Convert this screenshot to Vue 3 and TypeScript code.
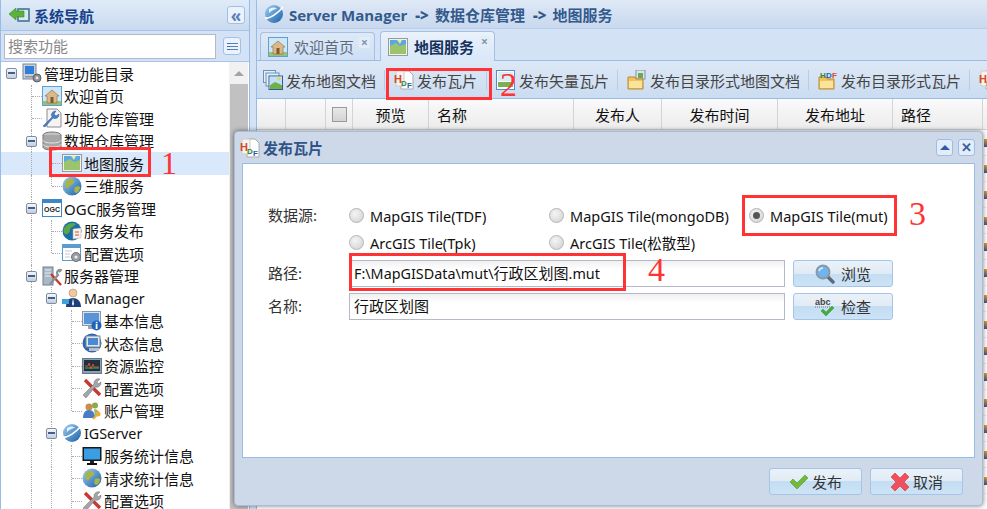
<script setup lang="ts">
interface TreeRow {
  label: string;
  icon: string;
  guides: string; // one char per level: | line, T tee, L last, E expander
  selected?: boolean;
}

const rows: TreeRow[] = [
  { label: '管理功能目录', icon: 'server', guides: 'R' },
  { label: '欢迎首页', icon: 'house', guides: 'T' },
  { label: '功能仓库管理', icon: 'wrenchdoc', guides: 'T' },
  { label: '数据仓库管理', icon: 'db', guides: 'E' },
  { label: '地图服务', icon: 'map', guides: '|T', selected: true },
  { label: '三维服务', icon: 'globe', guides: '|L' },
  { label: 'OGC服务管理', icon: 'ogc', guides: 'E' },
  { label: '服务发布', icon: 'globedoc', guides: '|T' },
  { label: '配置选项', icon: 'calgear', guides: '|L' },
  { label: '服务器管理', icon: 'srvtools', guides: 'E' },
  { label: 'Manager', icon: 'person', guides: '|E' },
  { label: '基本信息', icon: 'moninfo', guides: '||T' },
  { label: '状态信息', icon: 'status', guides: '||T' },
  { label: '资源监控', icon: 'chart', guides: '||T' },
  { label: '配置选项', icon: 'tools', guides: '||T' },
  { label: '账户管理', icon: 'users', guides: '||L' },
  { label: 'IGServer', icon: 'ie', guides: '|E' },
  { label: '服务统计信息', icon: 'monitor', guides: '||T' },
  { label: '请求统计信息', icon: 'globe', guides: '||T' },
  { label: '配置选项', icon: 'tools', guides: '||T' },
];

const isLatin = (s: string) => /^[A-Za-z]+$/.test(s);

const toolbar = [
  { label: '发布地图文档', icon: 'stack', width: 123 },
  { label: '发布瓦片', icon: 'hdf', width: 102 },
  { label: '发布矢量瓦片', icon: 'mapdoc', width: 131 },
  { label: '发布目录形式地图文档', icon: 'foldermap', width: 191 },
  { label: '发布目录形式瓦片', icon: 'folderhdf', width: 161 },
  { label: '', icon: 'hdf', width: 20 },
];

const columns = [
  { label: '', width: 29 },
  { label: '', width: 40 },
  { label: '', width: 27, check: true },
  { label: '预览', width: 76 },
  { label: '名称', width: 145, left: true },
  { label: '发布人', width: 88 },
  { label: '发布时间', width: 116 },
  { label: '发布地址', width: 115 },
  { label: '路径', width: 90, left: true },
];

const sources = [
  { label: 'MapGIS Tile(TDF)', checked: false },
  { label: 'MapGIS Tile(mongoDB)', checked: false },
  { label: 'MapGIS Tile(mut)', checked: true },
  { label: 'ArcGIS Tile(Tpk)', checked: false },
  { label: 'ArcGIS Tile(松散型)', checked: false },
];
</script>

<template>
  <svg class="defs" width="0" height="0">
    <defs>
      <linearGradient id="gGlobe" x1="0" y1="0" x2="1" y2="1">
        <stop offset="0" stop-color="#9fd0f0" />
        <stop offset="1" stop-color="#1a5fa8" />
      </linearGradient>
      <symbol id="i-back" viewBox="0 0 24 20">
        <rect x="9" y="3" width="13" height="14" rx="1" fill="#5d8aa6" />
        <rect x="11" y="5" width="9" height="10" fill="#dbe8f0" />
        <path d="M1 9l7-6v3h8v6H8v3z" fill="#5cb13c" stroke="#3b8a26" stroke-width=".6" />
      </symbol>
      <symbol id="i-server" viewBox="0 0 20 20">
        <rect x="1" y="1" width="13" height="15" fill="#c9ced6" stroke="#7b8594" />
        <rect x="3" y="3" width="9" height="8" fill="#2f7fd8" />
        <rect x="3" y="13" width="9" height="1.5" fill="#8b95a3" />
        <circle cx="15" cy="15" r="4" fill="#8e9297" stroke="#5c6066" />
        <circle cx="15" cy="15" r="1.4" fill="#e6e6e6" />
      </symbol>
      <symbol id="i-house" viewBox="0 0 20 20">
        <rect x=".5" y=".5" width="19" height="19" fill="#cfe6f7" stroke="#5aa2d6" />
        <rect x="1" y="15" width="18" height="4" fill="#9cc070" />
        <path d="M3 10l7-6 7 6h-2v7H5v-7z" fill="#d9b98a" stroke="#8a6a3c" stroke-width=".6" />
        <rect x="8.500" y="11" width="3" height="6" fill="#7c5a30" />
      </symbol>
      <symbol id="i-wrenchdoc" viewBox="0 0 20 20">
        <path d="M5 1h10l4 4v14H5z" fill="#f4f4f4" stroke="#8c8c8c" />
        <path d="M1 18l9-9a4 4 0 0 1 4-6l-2 3 2 2 3-2a4 4 0 0 1-6 4l-8 9z" fill="#4a7fc4" stroke="#2a5a9c" stroke-width=".5" />
      </symbol>
      <symbol id="i-db" viewBox="0 0 20 20">
        <ellipse cx="10" cy="4" rx="9" ry="3" fill="#c2c2c2" stroke="#777" />
        <path d="M1 4v12c0 2 4 3 9 3s9-1 9-3V4" fill="#a7a7a7" stroke="#777" />
        <path d="M1 9c0 2 4 3 9 3s9-1 9-3M1 13c0 2 4 3 9 3s9-1 9-3" fill="none" stroke="#e6e6e6" />
      </symbol>
      <symbol id="i-map" viewBox="0 0 20 20">
        <rect x=".5" y="1.500" width="19" height="17" fill="#f0f0f0" stroke="#9a9a9a" />
        <rect x="2" y="3" width="16" height="8" fill="#58a8e4" />
        <path d="M2 9l6-3 4 3 6-2v10H2z" fill="#9cc46c" />
        <path d="M9 3h5l-2 4z" fill="#e8e6a0" />
      </symbol>
      <symbol id="i-mapdoc" viewBox="0 0 20 20">
        <rect x=".5" y=".5" width="18" height="19" fill="#fff" stroke="#5b8cc0" />
        <rect x="2" y="2" width="15" height="9" fill="#d8ecfa" />
        <rect x="2" y="12" width="15" height="5" fill="#7fb050" />
      </symbol>
      <symbol id="i-globe" viewBox="0 0 20 20">
        <circle cx="10" cy="10" r="9.500" fill="url(#gGlobe)" />
        <path d="M5 4c3-2 6-1 7 1s-1 3-3 4-2 4-4 3-3-6 0-8zM13 11c2-1 4-1 5 0 0 3-2 6-4 6s-2-4-1-6z" fill="#a8b448" />
      </symbol>
      <symbol id="i-ie" viewBox="0 0 20 20">
        <circle cx="10" cy="10" r="9" fill="url(#gGlobe)" />
        <path d="M1 14C6 15 14 9 19 3" fill="none" stroke="#fff" stroke-width="1.600" />
        <path d="M5 5c3-2 6-2 8 0-3 0-6 2-8 4z" fill="#e8f2fb" />
      </symbol>
      <symbol id="i-ogc" viewBox="0 0 20 20">
        <rect x=".5" y="1.500" width="19" height="17" fill="#fff" stroke="#3f86c6" />
        <rect x="1" y="2" width="18" height="3" fill="#3f86c6" />
        <text x="10" y="14" font-size="7" font-family="'Liberation Sans', sans-serif" font-weight="700" text-anchor="middle" fill="#222">OGC</text>
      </symbol>
      <symbol id="i-globedoc" viewBox="0 0 20 20">
        <circle cx="10" cy="10" r="9.500" fill="#1b6ea8" />
        <path d="M3 6c3-4 8-5 11-3-2 3-6 3-6 6s-3 5-5 4-2-5 0-7z" fill="#59a548" />
        <path d="M11 8l8-1v10l-8 1z" fill="#f5f1ea" stroke="#b9b2a6" stroke-width=".5" />
        <path d="M13 11h4M13 14h4" stroke="#d0503c" />
      </symbol>
      <symbol id="i-calgear" viewBox="0 0 20 20">
        <rect x=".5" y="1.500" width="18" height="16" fill="#fff" stroke="#5a9ccf" />
        <rect x="1" y="2" width="17" height="3" fill="#5a9ccf" />
        <path d="M3 8h7M3 11h5M3 14h5" stroke="#c2cbd4" />
        <circle cx="14" cy="14" r="4.500" fill="#9a9ea3" stroke="#6e7277" />
        <circle cx="14" cy="14" r="1.600" fill="#eee" />
      </symbol>
      <symbol id="i-srvtools" viewBox="0 0 20 20">
        <rect x="1" y="1" width="10" height="18" fill="#a9b8c6" stroke="#6f7f8e" />
        <path d="M3 4h6M3 7h6M3 10h6" stroke="#e5ebf0" />
        <path d="M9 8l10 11" stroke="#c53a2e" stroke-width="2.400" />
        <path d="M8 18l8-9a3 3 0 0 1 3-5l-2 2" fill="none" stroke="#8c8f93" stroke-width="2.200" />
      </symbol>
      <symbol id="i-tools" viewBox="0 0 20 20">
        <path d="M3 2l15 15" stroke="#c93a2e" stroke-width="3.400" />
        <path d="M1 17L12 6a4.500 4.500 0 0 1 6-5l-3 3 1 2 3-2a4.500 4.500 0 0 1-6 5L4 20z" fill="#a2a5a9" stroke="#6e7175" stroke-width=".5" />
      </symbol>
      <symbol id="i-person" viewBox="0 0 20 20">
        <circle cx="11" cy="5" r="4" fill="#f0c9a0" stroke="#a57c50" stroke-width=".5" />
        <path d="M4 19c0-6 3-9 7-9s8 3 8 9z" fill="#1f3f7c" />
        <path d="M11 10l-1 6 1 2 1-2z" fill="#fff" />
        <rect x="0" y="11" width="7" height="5" fill="#3fa2d8" />
      </symbol>
      <symbol id="i-moninfo" viewBox="0 0 20 20">
        <rect x=".5" y=".5" width="18" height="14" fill="#dce3ec" stroke="#8b97a6" />
        <rect x="2" y="2" width="15" height="11" fill="#5a94d8" />
        <rect x="6" y="15" width="7" height="3" fill="#9aa5b2" />
        <circle cx="14.500" cy="14.500" r="5" fill="#1c62b8" />
        <rect x="13.700" y="13" width="1.800" height="5" fill="#fff" />
        <rect x="13.700" y="10.800" width="1.800" height="1.500" fill="#fff" />
      </symbol>
      <symbol id="i-status" viewBox="0 0 20 20">
        <circle cx="10" cy="10" r="9.500" fill="#2d68ae" />
        <rect x="4" y="3" width="14" height="11" fill="#dfe6ee" stroke="#7a8696" />
        <rect x="6" y="5" width="10" height="7" fill="#4a8ad2" />
        <rect x="7" y="15" width="10" height="3" fill="#b8bfc8" />
      </symbol>
      <symbol id="i-chart" viewBox="0 0 20 20">
        <rect x=".5" y="2.500" width="19" height="15" fill="#8ba0b4" stroke="#66788a" />
        <rect x="2" y="4" width="16" height="11" fill="#20303c" />
        <path d="M3 10h3l1-3 2 6 2-5 1 3h5" fill="none" stroke="#d84a3a" />
        <path d="M3 12h14" stroke="#4caf50" />
      </symbol>
      <symbol id="i-users" viewBox="0 0 20 20">
        <circle cx="7" cy="6" r="3.500" fill="#c98d4c" />
        <circle cx="13" cy="4.500" r="3" fill="#8aa84c" />
        <path d="M1 17c0-5 2-8 6-8s6 3 6 8z" fill="#4a7cc4" />
        <path d="M12 8c3 0 5 2 6 6l-5 1z" fill="#9ab85c" />
        <path d="M11 18l4-4" stroke="#e8b030" stroke-width="2" />
        <circle cx="16" cy="13" r="2.500" fill="#e8b030" />
      </symbol>
      <symbol id="i-monitor" viewBox="0 0 20 20">
        <rect x=".5" y="1" width="19" height="14" fill="#1a1a1a" />
        <rect x="2" y="2.500" width="16" height="11" fill="#3a9ee4" />
        <rect x="8" y="15" width="4" height="2" fill="#222" />
        <rect x="5" y="17" width="10" height="2" fill="#111" />
      </symbol>
      <symbol id="i-stack" viewBox="0 0 20 20">
        <rect x=".5" y=".5" width="12" height="12" fill="#e2eef8" stroke="#6a93b8" />
        <rect x="3" y="3" width="13" height="13" fill="#e2eef8" stroke="#6a93b8" />
        <rect x="6" y="6" width="13.500" height="13.500" fill="#fff" stroke="#2d5e94" />
        <rect x="7" y="7" width="12" height="7" fill="#bfe0f7" />
        <path d="M7 19v-4l5-3 7 3v4z" fill="#6fb04a" />
        <circle cx="16" cy="9" r="1.500" fill="#f2d040" />
      </symbol>
      <symbol id="i-hdf" viewBox="0 0 20 20">
        <path d="M7 1h8l4 4v14H7z" fill="#fff" stroke="#aaa" />
        <path d="M2 1h8v15H2z" fill="#f6f2ee" stroke="#ccc" />
        <text x="0" y="13" font-size="11" font-family="'Liberation Sans', sans-serif" font-weight="700" fill="#d8492c">H</text>
        <text x="7" y="16" font-size="8" font-family="'Liberation Sans', sans-serif" font-weight="700" fill="#2f8a3a">D</text>
        <text x="13" y="18" font-size="8" font-family="'Liberation Sans', sans-serif" font-weight="700" fill="#2a5ea8">F</text>
      </symbol>
      <symbol id="i-foldermap" viewBox="0 0 20 20">
        <rect x="9" y="0" width="9" height="9" fill="#d8e4ee" stroke="#7a94a8" />
        <rect x="11" y="3" width="5" height="5" fill="#6fa850" />
        <path d="M1 7h7l1 2h7v10H1z" fill="#f2c35c" stroke="#b98a2c" />
        <path d="M2 11h13v7H2z" fill="#fbe39c" />
      </symbol>
      <symbol id="i-folderhdf" viewBox="0 0 20 20">
        <path d="M1 7h7l1 2h7v10H1z" fill="#f2c35c" stroke="#b98a2c" />
        <path d="M2 11h13v7H2z" fill="#fbe39c" />
        <text x="2" y="8" font-size="8" font-family="'Liberation Sans', sans-serif" font-weight="700" fill="#2f8a3a">H</text>
        <text x="8" y="8" font-size="8" font-family="'Liberation Sans', sans-serif" font-weight="700" fill="#2a5ea8">D</text>
        <text x="14" y="8" font-size="8" font-family="'Liberation Sans', sans-serif" font-weight="700" fill="#d8492c">F</text>
      </symbol>
      <symbol id="i-lens" viewBox="0 0 20 20">
        <path d="M12 12l6 6" stroke="#5c6b7c" stroke-width="3.400" stroke-linecap="round" />
        <circle cx="8" cy="8" r="6.500" fill="#6fb4ec" stroke="#8b98a6" stroke-width="2" />
        <path d="M4 7a4 4 0 0 1 4-3" fill="none" stroke="#e4f2fc" stroke-width="1.500" />
      </symbol>
      <symbol id="i-abc" viewBox="0 0 20 20">
        <text x="0" y="8" font-size="9" font-family="'Liberation Sans', sans-serif" font-weight="700" fill="#444">abc</text>
        <path d="M0 10h15" stroke="#777" stroke-dasharray="1 1" />
        <path d="M6 14l2-2 3 3 6-6 2 2-8 8z" fill="#3fae3a" stroke="#2a8a28" stroke-width=".4" />
      </symbol>
      <symbol id="i-check" viewBox="0 0 20 20">
        <path d="M1 10l3-3 4 4 8-8 3 3-11 11z" fill="#75b83e" stroke="#4f9a28" stroke-width=".6" />
      </symbol>
      <symbol id="i-cross" viewBox="0 0 20 20">
        <path d="M5 1l5 5 5-5 4 4-5 5 5 5-4 4-5-5-5 5-4-4 5-5-5-5z" fill="#f0505a" stroke="#d0353f" stroke-width=".6" />
      </symbol>
    </defs>
  </svg>

  <div class="page">
    <aside class="side">
      <div class="side-head">
        <svg class="back"><use href="#i-back" /></svg>
        <span class="side-title">系统导航</span>
        <button class="mini">«</button>
      </div>
      <div class="side-search">
        <div class="search-box">搜索功能</div>
        <button class="mini list-btn">
          <span></span><span></span><span></span>
        </button>
      </div>
      <div class="side-body">
        <ul class="tree">
          <li
            v-for="(row, i) in rows"
            :key="i"
            class="tree-row"
            :class="{ selected: row.selected }"
          >
            <span v-if="row.guides !== 'R'" class="lead"></span>
            <span
              v-for="(g, j) in row.guides"
              :key="j"
              class="guide"
              :class="'g-' + (g === '|' ? 'line' : g)"
            >
              <i v-if="g === 'E' || g === 'R'" class="exp"></i>
            </span>
            <svg class="ic"><use :href="'#i-' + row.icon" /></svg>
            <span class="tree-label" :class="{ latin: isLatin(row.label) }">{{ row.label }}</span>
          </li>
        </ul>
        <div class="scroll">
          <i class="scroll-up"></i>
          <div class="scroll-thumb"></div>
        </div>
      </div>
    </aside>

    <main class="content">
      <div class="crumb">
        <svg class="crumb-ic"><use href="#i-ie" /></svg>
        <span>Server Manager<b class="arrow">-&gt;</b>数据仓库管理<b class="arrow">-&gt;</b>地图服务</span>
      </div>
      <div class="tabs">
        <div class="tab">
          <svg class="ic"><use href="#i-house" /></svg>
          <span>欢迎首页</span>
          <i class="tab-x">×</i>
        </div>
        <div class="tab active">
          <svg class="ic"><use href="#i-map" /></svg>
          <span>地图服务</span>
          <i class="tab-x">×</i>
        </div>
      </div>
      <div class="toolbar">
        <div
          v-for="(t, i) in toolbar"
          :key="i"
          class="tool"
          :style="{ width: t.width + 'px' }"
        >
          <svg class="ic"><use :href="'#i-' + t.icon" /></svg>
          <span v-if="t.label">{{ t.label }}</span>
        </div>
      </div>
      <div class="grid-head">
        <div
          v-for="(c, i) in columns"
          :key="i"
          class="cell"
          :class="{ left: c.left }"
          :style="{ width: c.width + 'px' }"
        >
          <i v-if="c.check" class="check"></i>
          {{ c.label }}
        </div>
      </div>
      <div class="grid-body">
        <div v-for="n in 14" :key="n" class="grid-row"><i></i></div>
      </div>
    </main>

    <section class="dialog">
      <header class="dlg-head">
        <svg class="ic"><use href="#i-hdf" /></svg>
        <span class="dlg-title">发布瓦片</span>
        <button class="dlg-btn"><i class="tri"></i></button>
        <button class="dlg-btn x">✕</button>
      </header>
      <div class="dlg-body">
        <div class="form-row radios-row">
          <label class="form-label">数据源:</label>
          <div class="radios">
            <div v-for="s in sources" :key="s.label" class="radio">
              <i class="dot" :class="{ on: s.checked }"></i>
              <span>{{ s.label }}</span>
            </div>
          </div>
        </div>
        <div class="form-row">
          <label class="form-label">路径:</label>
          <div class="input"><span class="latin">F:\MapGISData\mut\</span>行政区划图<span class="latin">.mut</span></div>
          <button class="btn side-btn">
            <svg class="ic"><use href="#i-lens" /></svg>浏览
          </button>
        </div>
        <div class="form-row">
          <label class="form-label">名称:</label>
          <div class="input">行政区划图</div>
          <button class="btn side-btn">
            <svg class="ic"><use href="#i-abc" /></svg>检查
          </button>
        </div>
      </div>
      <footer class="dlg-foot">
        <button class="btn foot-btn">
          <svg class="ic"><use href="#i-check" /></svg>发布
        </button>
        <button class="btn foot-btn">
          <svg class="ic"><use href="#i-cross" /></svg>取消
        </button>
      </footer>
    </section>

    <!-- red marks drawn on top of the screenshot -->
    <div class="mark m1"></div>
    <div class="mark m2"></div>
    <div class="mark m3"></div>
    <div class="mark m4"></div>
    <span class="num n1">1</span>
    <span class="num n2">2</span>
    <span class="num n3">3</span>
    <span class="num n4">4</span>
  </div>
</template>

<style>
html,
body {
  margin: 0;
  background: #fff;
}
</style>

<style scoped>
.defs {
  position: absolute;
}

.page {
  position: relative;
  display: flex;
  gap: 6px;
  width: 987px;
  height: 509px;
  overflow: hidden;
  background: #d3e2f4;
  font-family: "Noto Sans", "Noto Sans CJK SC", sans-serif;
  font-size: 15px;
  color: #111;
}

.ic {
  flex: none;
  width: 20px;
  height: 20px;
}

button {
  font-family: inherit;
  font-size: 15px;
  padding: 0;
  cursor: pointer;
}

/* left panel */
.side {
  flex: none;
  display: flex;
  flex-direction: column;
  width: 250px;
  box-sizing: border-box;
  border-left: 1px solid #99bbe8;
  border-right: 1px solid #99bbe8;
  background: #d3e2f4;
}

.side-head {
  display: flex;
  align-items: center;
  height: 30px;
  padding-left: 7px;
  background: linear-gradient(#e0ebf8, #c9daef);
  border-bottom: 1px solid #a9c4e8;
}

.back {
  width: 24px;
  height: 20px;
}

.side-title {
  margin-left: 2px;
  font-weight: 700;
  color: #15428b;
}

.mini {
  display: flex;
  align-items: center;
  justify-content: center;
  width: 18px;
  height: 18px;
  margin-left: auto;
  margin-right: 4px;
  box-sizing: border-box;
  background: #eaf2fb;
  border: 1px solid #a3bfe4;
  border-radius: 3px;
  color: #5a7fb8;
  font-size: 17px;
  font-weight: 700;
  line-height: 1;
}

.side-search {
  display: flex;
  align-items: center;
  justify-content: space-between;
  height: 31px;
  border-bottom: 1px solid #a9c4e8;
  box-sizing: border-box;
  padding-left: 3px;
}

.search-box {
  width: 212px;
  height: 25px;
  line-height: 23px;
  box-sizing: border-box;
  padding-left: 3px;
  background: #fff;
  border: 1px solid #b5b8c8;
  color: #888;
}

.list-btn {
  flex-direction: column;
  gap: 2px;
  margin-right: 8px;
}

.list-btn span {
  display: block;
  width: 8px;
  height: 1px;
  background: #5a7fb0;
  border-left: 3px solid #2a72d8;
}

.side-body {
  position: relative;
  display: flex;
  flex: 1;
  overflow: hidden;
  background: #fff;
}

.tree {
  flex: none;
  width: 228px;
  margin: 0;
  padding: 0;
  list-style: none;
}

.tree-row {
  display: flex;
  align-items: center;
  height: 22.5px;
  padding-left: 1px;
}

.tree-row.selected {
  background: #d9e8fb;
}

.lead {
  flex: none;
  width: 20px;
}

.guide {
  position: relative;
  flex: none;
  align-self: stretch;
  width: 20px;
}

.g-line::before,
.g-T::before,
.g-E::before,
.g-L::before {
  content: "";
  position: absolute;
  left: 9px;
  top: 0;
  bottom: 0;
  border-left: 1px dotted #aaa;
}

.g-L::before {
  bottom: 50%;
}

.g-T::after,
.g-L::after {
  content: "";
  position: absolute;
  left: 10px;
  right: 0;
  top: 50%;
  border-top: 1px dotted #aaa;
}

.exp {
  position: absolute;
  left: 4px;
  top: 6px;
  width: 11px;
  height: 11px;
  box-sizing: border-box;
  background: linear-gradient(#f4f7fb, #c3cedd);
  border: 1px solid #7f8da3;
  border-radius: 2px;
}

.exp::after {
  content: "";
  position: absolute;
  left: 1px;
  right: 1px;
  top: 3px;
  height: 2px;
  background: #3f5f8c;
}

.tree-label {
  margin-left: 2px;
  white-space: nowrap;
}

.tree-label.latin {
  font-size: 14.3px;
}

.scroll {
  flex: none;
  width: 19px;
  background: #f1f1f1;
  padding-top: 22px;
  position: relative;
}

.scroll-up {
  position: absolute;
  top: 9px;
  left: 5px;
  border: 5px solid transparent;
  border-top: 0;
  border-bottom: 5px solid #a3a3a3;
}

.scroll-thumb {
  height: 100%;
  margin-left: 1px;
  background: #c1c1c1;
}

/* right panel */
.content {
  flex: 1;
  display: flex;
  flex-direction: column;
  min-width: 0;
  border-left: 1px solid #99bbe8;
}

.crumb {
  display: flex;
  align-items: center;
  height: 28px;
  padding-left: 7px;
  background: linear-gradient(#dfe9f6, #c8d8ee);
  color: #335a8c;
  font-family: "Open Sans", "Noto Sans CJK SC", sans-serif;
  font-size: 15px;
  font-weight: 700;
  white-space: nowrap;
}

.crumb-ic {
  width: 20px;
  height: 20px;
  margin-right: 5px;
}

.arrow {
  margin: 0 6px 0 8px;
}

.tabs {
  display: flex;
  align-items: flex-end;
  gap: 5px;
  height: 33px;
  box-sizing: border-box;
  padding-left: 3px;
  border-top: 1px solid #b9cfe9;
  border-bottom: 1px solid #99bbe8;
  background: #d3e2f4;
}

.tab {
  position: relative;
  display: flex;
  align-items: center;
  gap: 6px;
  width: 115px;
  height: 28px;
  box-sizing: border-box;
  padding-left: 7px;
  background: linear-gradient(#dfe9f6, #cddff5);
  border: 1px solid #a5c0e4;
  border-bottom: 0;
  border-radius: 4px 4px 0 0;
  color: #5b6b80;
}

.tab.active {
  height: 30px;
  margin-bottom: -1px;
  background: linear-gradient(#eaf2fb, #d8e7f9);
  color: #15325c;
  font-weight: 700;
}

.tab-x {
  position: absolute;
  right: 4px;
  top: 4px;
  width: 11px;
  height: 11px;
  background: #e3ecf7;
  border-radius: 2px;
  color: #7f94b0;
  font-size: 12px;
  font-style: normal;
  font-weight: 700;
  line-height: 11px;
  text-align: center;
}

.toolbar {
  display: flex;
  align-items: center;
  height: 38px;
  box-sizing: border-box;
  padding: 1px 0 0 5px;
  background: linear-gradient(#dde8f6, #cbdcf1);
  border-bottom: 1px solid #99bbe8;
  white-space: nowrap;
  color: #444;
}

.tool {
  flex: none;
  display: flex;
  align-items: center;
  gap: 3px;
  height: 20px;
  box-sizing: border-box;
  border-right: 1px solid #b5cde8;
  padding-left: 1px;
}

.tool + .tool {
  padding-left: 9px;
}

.tool:last-child {
  border-right: 0;
}

.grid-head {
  display: flex;
  height: 30px;
  background: linear-gradient(#fafafa, #ececec);
  border-bottom: 1px solid #d0d0d0;
}

.cell {
  display: flex;
  align-items: center;
  justify-content: center;
  flex: none;
  box-sizing: border-box;
  border-right: 1px solid #d4d4d4;
}

.cell.left {
  justify-content: flex-start;
  padding-left: 8px;
}

.check {
  width: 15px;
  height: 15px;
  box-sizing: border-box;
  background: linear-gradient(#e8e8e8, #d4d4d4);
  border: 1px solid #9a9a9a;
}

.grid-body {
  flex: 1;
  background: #fff;
}

.grid-row {
  display: flex;
  justify-content: flex-end;
  align-items: center;
  height: 25px;
  border-bottom: 1px solid #eee;
}

.grid-row i {
  width: 3px;
  height: 8px;
  background: linear-gradient(#e0a030, #3a5a90);
}

/* dialog */
.dialog {
  position: absolute;
  left: 234px;
  top: 131px;
  display: flex;
  flex-direction: column;
  width: 749px;
  height: 375px;
  box-sizing: border-box;
  padding: 0 7px;
  background: #cdd9e8;
  border: 1px solid #a8bdd8;
  border-radius: 4px;
  box-shadow: 0 0 5px rgba(0, 0, 0, 0.5);
}

.dlg-head {
  display: flex;
  align-items: center;
  height: 31px;
  flex: none;
  margin-left: -2px;
}

.dlg-title {
  flex: 1;
  margin-left: 3px;
  font-weight: 700;
  color: #2f5488;
}

.dlg-btn {
  display: flex;
  align-items: center;
  justify-content: center;
  width: 17px;
  height: 17px;
  margin-left: 5px;
  box-sizing: border-box;
  background: #e3edf9;
  border: 1px solid #9dbce6;
  border-radius: 3px;
  color: #3a5f9c;
  font-size: 13px;
  font-weight: 700;
  line-height: 1;
}

.tri {
  border: 5px solid transparent;
  border-top: 0;
  border-bottom: 5px solid #2f5aa8;
}

.dlg-body {
  flex: 1;
  box-sizing: border-box;
  padding: 38px 0 0 25px;
  background: #fff;
  border: 1px solid #99bbe8;
}

.form-row {
  display: flex;
  align-items: center;
  height: 27px;
  margin-bottom: 6px;
}

.radios-row {
  align-items: flex-start;
  height: auto;
  margin-bottom: 4px;
}

.form-label {
  flex: none;
  width: 81px;
  color: #333;
  line-height: 27px;
}

.radios {
  display: grid;
  grid-template-columns: 200px 200px 160px;
  grid-auto-rows: 27px;
  font-size: 14.5px;
}

.radio {
  display: flex;
  align-items: center;
  gap: 6px;
  white-space: nowrap;
}

.dot {
  position: relative;
  flex: none;
  width: 15px;
  height: 15px;
  box-sizing: border-box;
  background: radial-gradient(circle at 40% 35%, #f4f4f4, #d0d0d0);
  border: 1px solid #b4b4b4;
  border-radius: 50%;
}

.dot.on::after {
  content: "";
  position: absolute;
  left: 3px;
  top: 3px;
  width: 7px;
  height: 7px;
  background: #555;
  border-radius: 50%;
}

.input {
  flex: none;
  width: 436px;
  height: 100%;
  box-sizing: border-box;
  padding-left: 4px;
  background: linear-gradient(#f0f0f0, #fff 35%);
  border: 1px solid #b5b8c8;
  line-height: 25px;
  white-space: nowrap;
}

.input .latin {
  font-size: 14.35px;
}

.btn {
  display: flex;
  align-items: center;
  justify-content: center;
  gap: 3px;
  box-sizing: border-box;
  background: linear-gradient(#eaf1f8 0, #e1ebf5 50%, #c3ddf3 50%, #cde3f5 100%);
  border: 1px solid #a4c4ea;
  border-radius: 3px;
  color: #333;
}

.side-btn {
  gap: 6px;
  width: 100px;
  height: 100%;
  margin-left: 8px;
}

.dlg-foot {
  flex: none;
  display: flex;
  justify-content: flex-end;
  align-items: flex-start;
  gap: 8px;
  height: 47px;
  box-sizing: border-box;
  padding: 10px 12px 0 0;
}

.foot-btn {
  width: 93px;
  height: 27px;
}

/* annotations */
.mark {
  position: absolute;
  box-sizing: border-box;
  border: 3px solid #f33;
}

.m1 {
  left: 49px;
  top: 147px;
  width: 102px;
  height: 30px;
}

.m2 {
  left: 386px;
  top: 68px;
  width: 106px;
  height: 32px;
}

.m3 {
  left: 742px;
  top: 195px;
  width: 155px;
  height: 41px;
}

.m4 {
  left: 349px;
  top: 253px;
  width: 277px;
  height: 38px;
}

.num {
  position: absolute;
  color: #f33;
  font-family: "Liberation Serif", serif;
  line-height: 1;
}

.n1 {
  left: 161px;
  top: 147px;
  font-size: 32px;
}

.n2 {
  left: 500px;
  top: 68px;
  font-size: 34px;
}

.n3 {
  left: 909px;
  top: 197px;
  font-size: 34px;
}

.n4 {
  left: 648px;
  top: 253px;
  font-size: 34px;
}
</style>
